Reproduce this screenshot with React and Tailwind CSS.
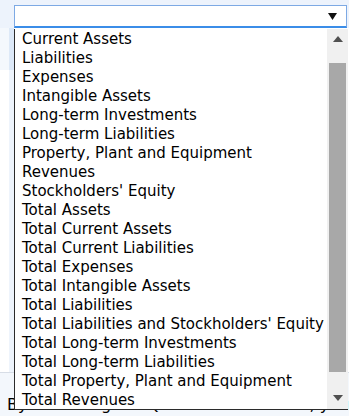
import React from "react";

const options = [
  "Current Assets",
  "Liabilities",
  "Expenses",
  "Intangible Assets",
  "Long-term Investments",
  "Long-term Liabilities",
  "Property, Plant and Equipment",
  "Revenues",
  "Stockholders' Equity",
  "Total Assets",
  "Total Current Assets",
  "Total Current Liabilities",
  "Total Expenses",
  "Total Intangible Assets",
  "Total Liabilities",
  "Total Liabilities and Stockholders' Equity",
  "Total Long-term Investments",
  "Total Long-term Liabilities",
  "Total Property, Plant and Equipment",
  "Total Revenues",
];

function Arrow({ up, className }) {
  return (
    <svg width="10" height="6" viewBox="0 0 10 6" className={className}>
      {up ? <polygon points="0,6 5,0 10,6" fill="currentColor" /> : <polygon points="0,0 10,0 5,6" fill="currentColor" />}
    </svg>
  );
}

export default function App() {
  return (
    <div className="relative w-[349px] h-[416px] overflow-hidden bg-white font-['DejaVu_Sans',sans-serif] text-black">
      {/* page behind the open list */}
      <div className="h-[5px] bg-[#edf3fc]" />
      <div className="flex bg-[#edf3fc]">
        <div className="w-[14px]" />
        <div className="flex-1 h-[23px] flex items-center justify-end pr-[9px] bg-white border border-[#7da9e4] border-b-2 border-b-[#3b8de8] mr-[2px]">
          <svg width="9" height="9" viewBox="0 0 9 9">
            <polygon points="0,1 9,1 4.5,8" fill="#111" />
          </svg>
        </div>
      </div>
      <div className="flex h-[42px]">
        <div className="w-[9px] bg-[#f4f8fd]" />
        <div className="w-[5px] bg-[#dde9f8]" />
      </div>
      <div className="flex h-[302px]">
        <div className="w-[9px] bg-white" />
        <div className="w-[5px] bg-[#eef4fc]" />
      </div>
      <div className="border-t border-[#d7dde6] bg-[#f3f7fc] h-[50px] pt-[22px] pl-[7px] text-[16px] leading-[20px] whitespace-nowrap">
        By accessing the Question Assistance, you will
      </div>

      {/* open dropdown list */}
      <div className="absolute left-[14px] top-[29px] w-[334px] h-[381px] flex bg-white border-l border-b border-[#2b2b2b]">
        <ul className="flex-1 pl-[7px]">
          {options.map((o) => (
            <li key={o} className="h-[19px] leading-[21px] text-[15px] whitespace-nowrap">
              {o}
            </li>
          ))}
        </ul>
        <div className="w-[21px] bg-[#f0f0f0] flex flex-col items-center">
          <div className="h-[20px] flex items-center justify-center text-[#505050]">
            <Arrow up />
          </div>
          <div className="flex-1 w-full px-[2px] pt-[14px]">
            <div className="h-[309px] bg-[#a8a8a8]" />
          </div>
          <div className="h-[22px] flex items-center justify-center text-[#505050]">
            <Arrow />
          </div>
        </div>
      </div>
    </div>
  );
}
